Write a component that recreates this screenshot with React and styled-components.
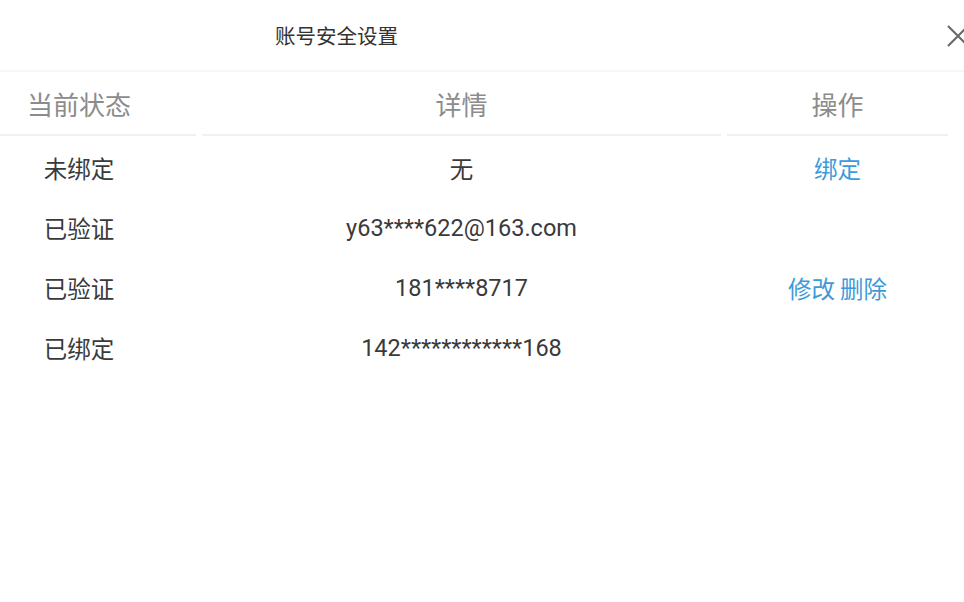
import React from "react";
import styled, { createGlobalStyle } from "styled-components";

const Global = createGlobalStyle`
  html, body { margin: 0; padding: 0; background: #fff; }
  body { font-family: Roboto, "Noto Sans CJK SC", sans-serif; overflow: hidden; }
`;

const Page = styled.div`
  width: 964px;
  height: 602px;
  background: #fff;
  display: flex;
  flex-direction: column;
`;

const TitleBar = styled.div`
  height: 72px;
  display: flex;
  align-items: center;
  justify-content: space-between;
  padding-left: 275px;
  border-bottom: 2px solid #f6f6f6;
  box-sizing: border-box;
`;

const Title = styled.div`
  font-size: 20.5px;
  color: #333;
  line-height: 1;
  margin-top: 4px;
`;

const Close = styled.button`
  width: 28px;
  height: 28px;
  border: none;
  background: none;
  padding: 0;
  margin-right: -8px;
  margin-top: 2px;
  display: flex;
  align-items: center;
  justify-content: center;
  cursor: pointer;
`;

const Table = styled.div`
  display: grid;
  grid-template-columns: 196px 519px 221px;
  column-gap: 6px;
  padding-right: 16px;
`;

const HeadCell = styled.div`
  height: 64px;
  display: flex;
  align-items: center;
  justify-content: center;
  padding-right: ${(p) => p.$shift || 0}px;
  font-size: 26px;
  color: #8c8c8c;
  border-bottom: 2px solid #f1f1f1;
  box-sizing: border-box;
`;

const Cell = styled.div`
  height: 60px;
  display: flex;
  align-items: center;
  justify-content: center;
  padding-right: ${(p) => p.$shift || 0}px;
  font-size: 23.5px;
  color: #3a3a3a;
  box-sizing: border-box;
`;

const Row = styled.div`
  display: contents;
`;

const Spacer = styled.div`
  grid-column: 1 / -1;
  height: 2px;
`;

const Actions = styled.div`
  display: flex;
  gap: 5px;
`;

const Link = styled.a`
  color: #3d9ad9;
  font-size: 23.5px;
  text-decoration: none;
  cursor: pointer;
`;

const rows = [
  { status: "未绑定", detail: "无", actions: ["绑定"] },
  { status: "已验证", detail: "y63****622@163.com", actions: [] },
  { status: "已验证", detail: "181****8717", actions: ["修改", "删除"] },
  { status: "已绑定", detail: "142************168", actions: [] },
];

export default function App() {
  return (
    <Page>
      <Global />
      <TitleBar>
        <Title>账号安全设置</Title>
        <Close aria-label="关闭">
          <svg width="24" height="24" viewBox="0 0 24 24">
            <path d="M2 2 L22 22 M22 2 L2 22" stroke="#6a6a6a" strokeWidth="2.2" fill="none" />
          </svg>
        </Close>
      </TitleBar>
      <Table>
        <HeadCell $shift={38}>当前状态</HeadCell>
        <HeadCell>详情</HeadCell>
        <HeadCell>操作</HeadCell>
        <Spacer />
        {rows.map((r, i) => (
          <Row key={i}>
            <Cell $shift={38}>{r.status}</Cell>
            <Cell>{r.detail}</Cell>
            <Cell>
              <Actions>
                {r.actions.map((a) => (
                  <Link key={a}>{a}</Link>
                ))}
              </Actions>
            </Cell>
          </Row>
        ))}
      </Table>
    </Page>
  );
}
